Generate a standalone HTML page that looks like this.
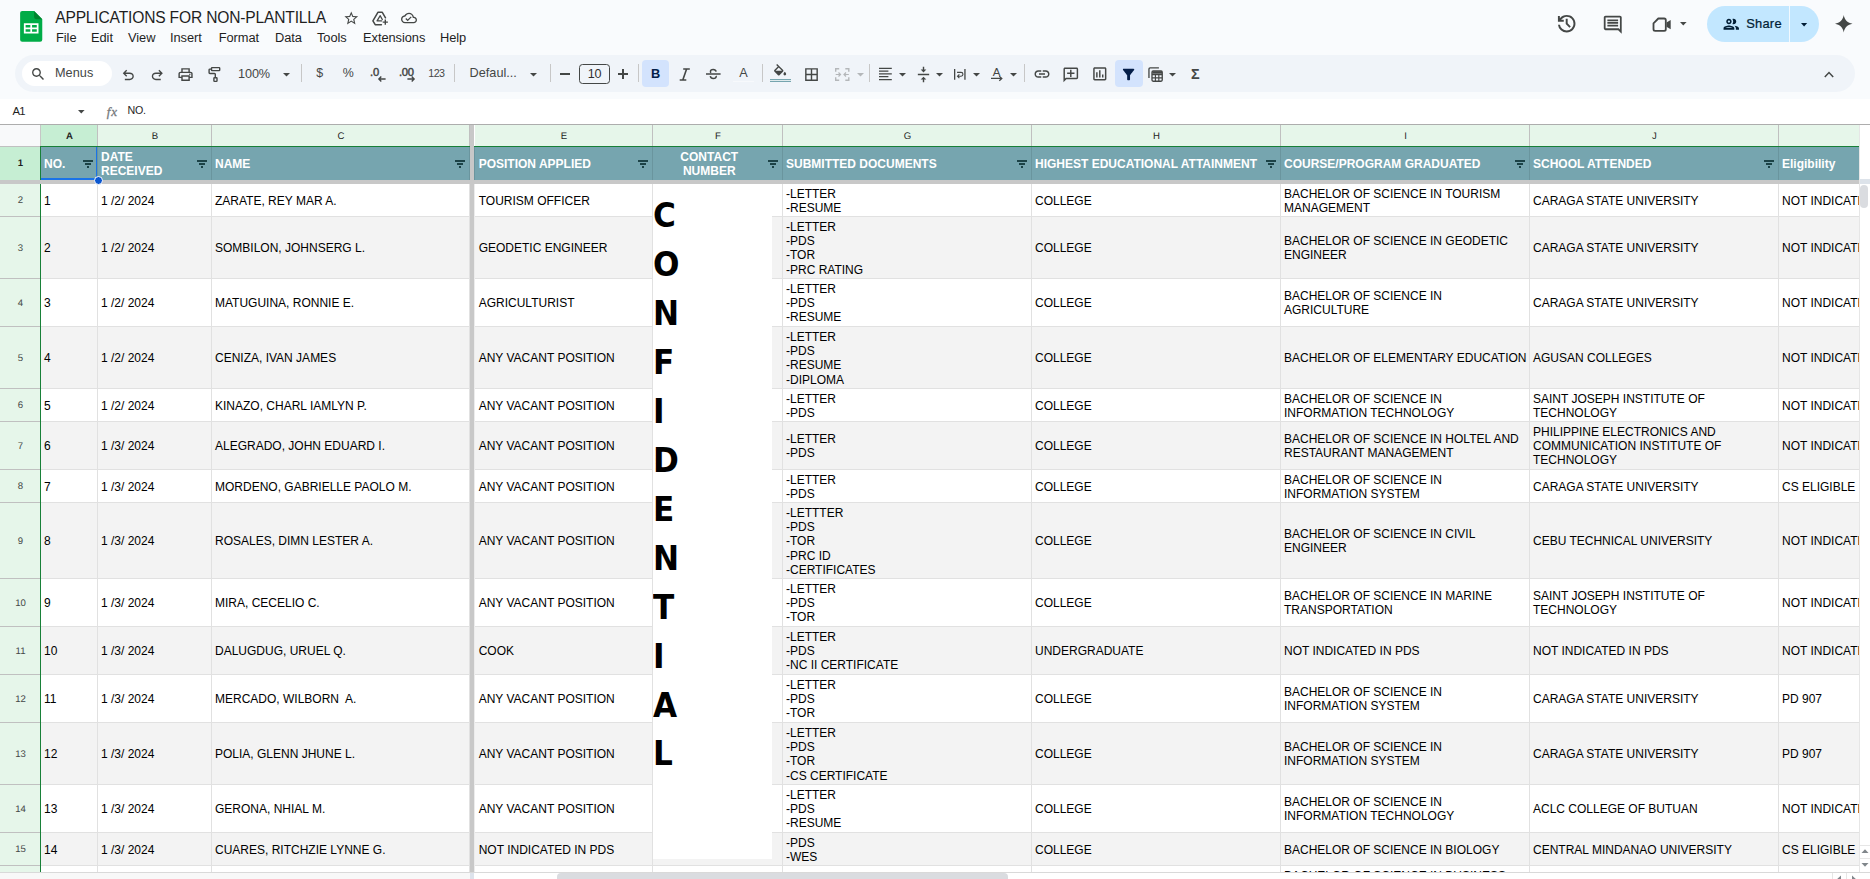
<!DOCTYPE html><html lang="en"><head><meta charset="utf-8"><title>APPLICATIONS FOR NON-PLANTILLA - Google Sheets</title><style>
*{box-sizing:border-box;margin:0;padding:0}
html,body{width:1870px;height:879px;overflow:hidden;background:#f9fbfd;font-family:"Liberation Sans",sans-serif;color:#1f1f1f}
.abs{position:absolute}
#root{position:relative;width:1870px;height:879px;overflow:hidden;background:#f9fbfd}
.ui{font-family:"Liberation Sans",sans-serif;color:#444746;white-space:nowrap}
.title{left:55.2px;top:7.8px;font-size:15.6px;letter-spacing:-0.175px;color:#1f1f1f;line-height:20px}
.menu{top:30.2px;font-size:12.85px;line-height:16px;color:#1f1f1f;letter-spacing:-0.05px}
.tb{left:15px;top:55px;width:1840px;height:37px;border-radius:18.5px;background:#f0f4f9}
.sep{width:1px;height:18px;top:64px;background:#c7c7c7}
.cell{position:absolute;overflow:hidden;font-size:12px;line-height:14.33px;color:#000;display:flex;align-items:center;padding:2px 3px 0 3px;white-space:pre;border-right:1px solid #e1e1e1;border-bottom:1px solid #e1e1e1}
.cell.w{background:#fff}
.cell.g{background:#f3f3f3}
.hc{position:absolute;overflow:hidden;font-size:12px;line-height:14.33px;color:#fff;font-weight:700;display:flex;align-items:center;padding:2px 3px 0 3px;white-space:pre;background:#76a5af;border-right:1px solid #6a959e}
.colh{position:absolute;top:125px;height:21px;background:#e6f6ea;border-right:1px solid #c0c0c0;font-size:9.6px;text-rendering:geometricPrecision;color:#1f1f1f;text-align:center;line-height:24px;padding-left:1px}
.rowh{position:absolute;left:0;width:40px;background:#e6f6ea;border-bottom:1px solid #c0c0c0;font-size:9.6px;text-rendering:geometricPrecision;color:#444746;text-align:center;padding-left:1px;padding-top:1px;display:flex;align-items:center;justify-content:center}
svg{position:absolute;overflow:visible}
.conf{font-family:"DejaVu Sans Condensed","DejaVu Sans",sans-serif;font-weight:700;font-size:33.6px;line-height:48.96px;color:#000;word-break:break-all;overflow-wrap:anywhere;white-space:normal;text-align:left;transform-origin:0 0;transform:scaleX(1.03)}
</style></head><body><div id="root">
<!--TITLEBAR-->
<div class="abs ui title">APPLICATIONS FOR NON-PLANTILLA</div>
<div class="abs ui menu" style="left:56px">File</div>
<div class="abs ui menu" style="left:91px">Edit</div>
<div class="abs ui menu" style="left:128px">View</div>
<div class="abs ui menu" style="left:170px">Insert</div>
<div class="abs ui menu" style="left:218.7px">Format</div>
<div class="abs ui menu" style="left:275px">Data</div>
<div class="abs ui menu" style="left:317px">Tools</div>
<div class="abs ui menu" style="left:363px">Extensions</div>
<div class="abs ui menu" style="left:440px">Help</div>
<svg style="left:19.6px;top:11.1px" width="22.4" height="30.8" viewBox="0 0 23 32"><path d="M2.2 0H14.5L23 8.5V29.8a2.2 2.2 0 0 1-2.200 2.200H2.200A2.200 2.200 0 0 1 0 29.800V2.200A2.200 2.200 0 0 1 2.200 0z" fill="#00ac47"/><path d="M14.5 0L23 8.500H16.700a2.200 2.200 0 0 1-2.200-2.200z" fill="#00832d"/><path d="M3.900 12.700h15.200v10.600H3.900z M5.700 14.500v2.600h4.900v-2.600z M12.400 14.500v2.600h4.900v-2.600z M5.700 18.900v2.600h4.900v-2.600z M12.400 18.900v2.600h4.900v-2.600z" fill="#fff" fill-rule="evenodd"/></svg>
<svg style="left:343.05px;top:10.05px" width="16.5" height="16.5" viewBox="0 0 24 24" fill="#444746" ><path d="M22 9.24l-7.19-.62L12 2 9.19 8.63 2 9.24l5.46 4.73L5.82 21 12 17.27 18.18 21l-1.63-7.03L22 9.24zM12 15.4l-3.76 2.27 1-4.28-3.32-2.88 4.38-.38L12 6.1l1.710 4.040 4.380.380-3.320 2.880 1 4.280L12 15.400z" /></svg>
<svg style="left:370px;top:9px" width="20" height="18" viewBox="370 9 20 18" fill="none" stroke="#444746" stroke-width="1.500" stroke-linejoin="round" stroke-linecap="round"><path d="M385.500 17.800L382.300 12.300H377.900L372.900 20.900L375.200 24.700H381.400"/><path d="M382.300 19.500L380.100 15.700L377.100 20.900H381.600" stroke-width="1.300"/><path d="M385.300 19.500V24.800M382.700 22.150H387.900" stroke-width="1.400" stroke-linecap="butt"/></svg>
<svg style="left:401.00px;top:9.80px" width="16" height="16" viewBox="0 0 24 24" fill="#444746" ><path d="M19.35 10.04C18.67 6.59 15.64 4 12 4 9.11 4 6.6 5.64 5.35 8.04 2.34 8.36 0 10.91 0 14c0 3.31 2.69 6 6 6h13c2.76 0 5-2.24 5-5 0-2.64-2.05-4.78-4.65-4.960zM19 18H6c-2.210 0-4-1.790-4-4 0-2.050 1.530-3.760 3.560-3.970l1.070-.110.500-.950C8.080 7.140 9.940 6 12 6c2.620 0 4.880 1.860 5.390 4.430l.300 1.500 1.530.110c1.560.100 2.780 1.410 2.780 2.960 0 1.650-1.350 3-3 3zm-9-3.820l-2.090-2.090L6.500 13.500 10 17l6.010-6.010-1.410-1.410z" /></svg>
<svg style="left:1555.10px;top:11.90px" width="23.4" height="23.4" viewBox="0 -960 960 960" fill="#444746" ><path d="M480-120q-138 0-240.500-91.500T122-440h82q14 104 92.500 172T480-200q117 0 198.500-81.500T760-480q0-117-81.500-198.500T480-760q-69 0-129 32t-101 88h110v80H120v-240h80v94q51-64 124.500-99T480-840q75 0 140.500 28.500t114 77q48.500 48.500 77 114T840-480q0 75-28.500 140.500t-77 114q-48.500 48.500-114 77T480-120Zm112-192L440-464v-216h80v184l128 128-56 56Z"/></svg>
<svg style="left:1601.55px;top:13.65px" width="21.5" height="21.5" viewBox="0 0 24 24" fill="#444746" transform="scale(-1,1)"><path d="M4 4h16v12H5.170L4 17.170V4m0-2c-1.100 0-1.990.900-1.990 2L2 22l4-4h14c1.100 0 2-.900 2-2V4c0-1.100-.900-2-2-2H4zm2 10h12v2H6v-2zm0-3h12v2H6V9zm0-3h12v2H6V6z" /></svg>
<svg style="left:1652px;top:16px" width="20" height="17" viewBox="0 0 20 17"><path d="M6.300 2.500H12.200a1.600 1.600 0 0 1 1.600 1.600V13.200a1.600 1.600 0 0 1-1.600 1.600H3.100a1.600 1.600 0 0 1-1.600-1.600V7.300Z" fill="none" stroke="#444746" stroke-width="1.800" stroke-linejoin="round"/><path d="M14.500 6.600L18.700 4v9.300L14.500 10.700z" fill="#444746"/></svg>
<svg style="left:1679.70px;top:21.50px" width="6.6" height="3.4" viewBox="0 0 10 5" preserveAspectRatio="none" fill="#444746"><path d="M0 0h10L5 5z"/></svg>
<div class="abs" style="left:1707px;top:6px;width:112px;height:36px;border-radius:18px;background:#c2e7ff"></div>
<div class="abs" style="left:1788.600px;top:6px;width:1.400px;height:36px;background:#f2f9ff"></div>
<svg style="left:1721.55px;top:14.75px" width="18.5" height="18.5" viewBox="0 0 24 24" fill="#001d35" ><path d="M9 13.75c-2.34 0-7 1.17-7 3.5V19h14v-1.75c0-2.330-4.660-3.500-7-3.500zM4.340 17c.840-.580 2.870-1.250 4.660-1.250s3.820.670 4.660 1.250H4.340zM9 12c1.930 0 3.500-1.570 3.500-3.500S10.930 5 9 5 5.500 6.570 5.500 8.500 7.070 12 9 12zm0-5c.830 0 1.500.670 1.500 1.500s-.670 1.500-1.500 1.500-1.500-.670-1.500-1.500.670-1.500 1.500-1.500zm7.040 6.810c1.160.840 1.960 1.960 1.960 3.440V19h4v-1.750c0-2.020-3.500-3.170-5.960-3.440zM15 12c1.930 0 3.500-1.570 3.500-3.500S16.930 5 15 5c-.540 0-1.040.130-1.500.350.630.890 1 1.980 1 3.150s-.370 2.260-1 3.150c.460.220.960.350 1.500.350z" /></svg>
<div class="abs ui" style="left:1746.2px;top:15.50px;height:16.12px;line-height:16.12px;font-size:12.9px;color:#001d35;font-weight:400;letter-spacing:0.25px;-webkit-text-stroke:0.22px #001d35;">Share</div>
<svg style="left:1801.00px;top:22.90px" width="6.2" height="3.4" viewBox="0 0 10 5" preserveAspectRatio="none" fill="#001d35"><path d="M0 0h10L5 5z"/></svg>
<svg style="left:1834.700px;top:15.300px" width="17.500" height="17.500" viewBox="0 0 24 24" fill="#444746"><path d="M12 0C13 6.500 17.500 11 24 12 17.500 13 13 17.500 12 24 11 17.500 6.500 13 0 12 6.500 11 11 6.500 12 0z"/></svg>
<!--/TITLEBAR-->
<div class="abs tb"></div>
<!--TOOLBAR-->
<div class="abs" style="left:22px;top:61px;width:90px;height:25px;border-radius:12.500px;background:#fff"></div>
<svg style="left:30.40px;top:65.90px" width="16.4" height="16.4" viewBox="0 0 24 24" fill="#444746" ><path d="M15.5 14h-.79l-.28-.27C15.41 12.59 16 11.11 16 9.5 16 5.91 13.09 3 9.5 3S3 5.91 3 9.5 5.91 16 9.5 16c1.61 0 3.09-.59 4.23-1.57l.27.28v.79l5 4.99L20.49 19l-4.99-5zm-6 0C7.01 14 5 11.99 5 9.500S7.010 5 9.500 5 14 7.010 14 9.500 11.990 14 9.500 14z" /></svg>
<div class="abs ui" style="left:55px;top:65.80px;height:15.88px;line-height:15.88px;font-size:12.7px;color:#444746;font-weight:400;letter-spacing:0.05px;">Menus</div>
<svg style="left:120.00px;top:67.10px" width="16.6" height="16.6" viewBox="0 -960 960 960" fill="#444746" ><path d="M280-200v-80h284q63 0 109.500-40T720-420q0-60-46.500-100T564-560H312l104 104-56 56-200-200 200-200 56 56-104 104h252q97 0 166.500 63T800-420q0 94-69.500 157T564-200H280Z"/></svg>
<svg style="left:148.60px;top:67.10px" width="16.6" height="16.6" viewBox="0 -960 960 960" fill="#444746" ><path d="M396-200q-97 0-166.500-63T160-420q0-94 69.500-157T396-640h252L544-744l56-56 200 200-200 200-56-56 104-104H396q-63 0-109.500 40T240-420q0 60 46.500 100T396-280h284v80H396Z"/></svg>
<svg style="left:177.45px;top:65.55px" width="17.1" height="17.1" viewBox="0 -960 960 960" fill="#444746" ><path d="M640-640v-120H320v120h-80v-200h480v200h-80Zm-480 80h640-640Zm560 100q17 0 28.500-11.500T760-500q0-17-11.500-28.500T720-540q-17 0-28.500 11.500T680-500q0 17 11.500 28.500T720-460Zm-80 260v-160H320v160h320Zm80 80H240v-160H80v-240q0-51 35-85.500t85-34.500h560q51 0 85.500 34.500T880-520v240H720v160Zm80-240v-160q0-17-11.500-28.500T760-560H200q-17 0-28.500 11.500T160-520v160h80v-80h480v80h80Z"/></svg>
<svg style="left:200px;top:60px" width="30" height="28" viewBox="0 0 30 28" fill="none" stroke="#444746" stroke-width="1.400" stroke-linejoin="round" stroke-linecap="round"><rect x="11.500" y="7.600" width="8.200" height="3.000" rx="0.600"/><path d="M11.500 9.100H9.900a0.800 0.800 0 0 0-0.800 0.800v2.800a0.800 0.800 0 0 0 0.800 0.800h4.600a0.800 0.800 0 0 1 0.800 0.800v2.500"/><rect x="13.900" y="17.700" width="3.100" height="3.700" rx="0.600"/></svg>
<div class="abs ui" style="left:238px;top:67.10px;height:15.88px;line-height:15.88px;font-size:12.7px;color:#444746;font-weight:400;letter-spacing:-0.1px;">100%</div>
<svg style="left:282.80px;top:72.70px" width="7" height="3.6" viewBox="0 0 10 5" preserveAspectRatio="none" fill="#444746"><path d="M0 0h10L5 5z"/></svg>
<div class="abs sep" style="left:301px"></div>
<div class="abs ui" style="left:319.6px;top:66.20px;height:15.50px;line-height:15.50px;font-size:12.4px;color:#444746;font-weight:400;letter-spacing:0px;transform:translateX(-50%);">$</div>
<div class="abs ui" style="left:348.2px;top:66.20px;height:15.50px;line-height:15.50px;font-size:12.4px;color:#444746;font-weight:400;letter-spacing:0px;transform:translateX(-50%);">%</div>
<div class="abs ui" style="left:370px;top:65.40px;height:14.00px;line-height:14.00px;font-size:11.2px;color:#444746;font-weight:400;letter-spacing:-0.1px;-webkit-text-stroke:0.45px #444746;">.0</div>
<svg style="left:377.500px;top:75.500px" width="8" height="6" viewBox="0 0 8 6" fill="none" stroke="#444746" stroke-width="1.400"><path d="M7.600 3H1M3.300 0.600L0.900 3l2.400 2.400"/></svg>
<div class="abs ui" style="left:399px;top:65.40px;height:14.00px;line-height:14.00px;font-size:11.2px;color:#444746;font-weight:400;letter-spacing:-0.35px;-webkit-text-stroke:0.45px #444746;">.00</div>
<svg style="left:406.500px;top:75.500px" width="8" height="6" viewBox="0 0 8 6" fill="none" stroke="#444746" stroke-width="1.400"><path d="M0.400 3H7M4.700 0.600L7.100 3 4.700 5.400"/></svg>
<div class="abs ui" style="left:428.3px;top:66.60px;height:13.38px;line-height:13.38px;font-size:10.7px;color:#444746;font-weight:400;letter-spacing:-0.55px;">123</div>
<div class="abs sep" style="left:454px"></div>
<div class="abs ui" style="left:469.6px;top:66.10px;height:15.88px;line-height:15.88px;font-size:12.7px;color:#444746;font-weight:400;letter-spacing:0px;">Defaul...</div>
<svg style="left:529.70px;top:72.70px" width="7" height="3.6" viewBox="0 0 10 5" preserveAspectRatio="none" fill="#444746"><path d="M0 0h10L5 5z"/></svg>
<div class="abs sep" style="left:550px"></div>
<div class="abs" style="left:560px;top:73.100px;width:9.600px;height:1.500px;background:#444746"></div>
<div class="abs" style="left:579px;top:63.500px;width:31px;height:20.500px;border:1px solid #444746;border-radius:3.500px"></div>
<div class="abs ui" style="left:594.6px;top:67.10px;height:15.75px;line-height:15.75px;font-size:12.6px;color:#303030;font-weight:400;letter-spacing:-0.2px;transform:translateX(-50%);">10</div>
<div class="abs" style="left:618.200px;top:73.150px;width:9.800px;height:1.450px;background:#444746"></div>
<div class="abs" style="left:622.400px;top:69.050px;width:1.450px;height:9.800px;background:#444746"></div>
<div class="abs sep" style="left:638px"></div>
<div class="abs" style="left:642px;top:60px;width:27px;height:27px;border-radius:4px;background:#d3e3fd"></div>
<div class="abs ui" style="left:655.6px;top:66.40px;height:16.00px;line-height:16.00px;font-size:12.8px;color:#041e49;font-weight:700;letter-spacing:0px;transform:translateX(-50%);">B</div>
<svg style="left:677.500px;top:67.500px" width="14" height="13" viewBox="0 0 14 13" fill="none" stroke="#444746" stroke-width="1.600"><path d="M5.200 1h6.600M1.700 12h6.600M8.600 1L4.800 12"/></svg>
<svg style="left:705px;top:65.900px" width="17" height="16" viewBox="0 0 17 16" fill="none" stroke="#444746" stroke-width="1.500"><path d="M1 8h14.600"/><g transform="translate(8.300 8) scale(0.860) translate(-8.500 -8)"><path d="M11.800 5.200C11.500 3.600 10.200 2.700 8.400 2.700 6.500 2.700 5.200 3.700 5.200 5.200c0 .6.200 1.100.5 1.500M5 10.600c.3 1.700 1.600 2.700 3.500 2.700 2 0 3.400-1 3.400-2.600 0-.2 0-.4-.1-.6" stroke-width="1.700"/></g></svg>
<div class="abs ui" style="left:743.4px;top:65.90px;height:15.88px;line-height:15.88px;font-size:12.7px;color:#444746;font-weight:400;letter-spacing:0px;transform:translateX(-50%);">A</div>
<div class="abs" style="left:733px;top:80.700px;width:21px;height:1.200px;background:#f7f9fc"></div>
<div class="abs sep" style="left:762px"></div>
<svg style="left:772px;top:64px" width="16.200" height="13.500" viewBox="0 0 24 20" fill="#444746"><path d="M16.56 8.94L7.62 0 6.21 1.41l2.38 2.38-5.15 5.15c-.59.59-.59 1.54 0 2.12l5.5 5.5c.29.29.68.44 1.06.44s.77-.15 1.06-.44l5.5-5.5c.59-.58.59-1.53 0-2.12zM5.21 10L10 5.21 14.790 10H5.210zM19 11.500s-2 2.170-2 3.500c0 1.100.900 2 2 2s2-.900 2-2c0-1.330-2-3.500-2-3.500z"/></svg>
<div class="abs" style="left:770px;top:78.900px;width:21px;height:3.300px;background:#dfeaec;border-top:0.900px solid #76a5af;border-bottom:0.900px solid #76a5af"></div>
<svg style="left:803.10px;top:65.80px" width="17" height="17" viewBox="0 0 24 24" fill="#444746" ><path d="M3 3v18h18V3H3zm8 16H5v-6h6v6zm0-8H5V5h6v6zm8 8h-6v-6h6v6zm0-8h-6V5h6v6z" /></svg>
<svg style="left:834.500px;top:67.500px" width="14.500" height="13" viewBox="0 0 14.500 13" fill="none" stroke="#b4b7ba" stroke-width="1.400"><path d="M4.200 0.700H0.700v3.100M0.700 9.200v3.100h3.500M10.300 0.700h3.500v3.100M13.800 9.200v3.100h-3.500"/><path d="M0.700 6.500h4.600M3.500 4.500l2 2-2 2M13.800 6.500H9.200M11 4.500l-2 2 2 2" stroke-width="1.200"/></svg>
<svg style="left:856.50px;top:72.70px" width="7" height="3.6" viewBox="0 0 10 5" preserveAspectRatio="none" fill="#b4b7ba"><path d="M0 0h10L5 5z"/></svg>
<div class="abs sep" style="left:869px"></div>
<svg style="left:879px;top:67px" width="13" height="14" viewBox="0 0 13 14" fill="#444746"><path d="M0 0.700h12.800v1.250H0zM0 3.500h9.400v1.250H0zM0 6.300h12.800v1.250H0zM0 9.100h9.400v1.250H0zM0 12h12.800v1.250H0z"/></svg>
<svg style="left:898.80px;top:72.70px" width="7" height="3.6" viewBox="0 0 10 5" preserveAspectRatio="none" fill="#444746"><path d="M0 0h10L5 5z"/></svg>
<svg style="left:914.70px;top:65.70px" width="17" height="17" viewBox="0 0 24 24" fill="#444746" ><path d="M8 19h3v4h2v-4h3l-4-4-4 4zm8-14h-3V1h-2v4H8l4 4 4-4zM4 11v2h16v-2H4z" /></svg>
<svg style="left:935.80px;top:72.70px" width="7" height="3.6" viewBox="0 0 10 5" preserveAspectRatio="none" fill="#444746"><path d="M0 0h10L5 5z"/></svg>
<svg style="left:954px;top:68.800px" width="11.600" height="10.800" viewBox="0 0 12.500 11.500" fill="none" stroke="#444746" stroke-width="1.400"><path d="M0.700 0v11.500M11.800 0v11.500"/><path d="M3.300 3.600h4.300a2 2 0 0 1 0 4.100H4M5.800 5.700L3.800 7.700l2 2" stroke-width="1.200"/></svg>
<svg style="left:973.00px;top:72.70px" width="7" height="3.6" viewBox="0 0 10 5" preserveAspectRatio="none" fill="#444746"><path d="M0 0h10L5 5z"/></svg>
<div class="abs ui" style="left:996.6px;top:64.70px;height:14.38px;line-height:14.38px;font-size:11.5px;color:#444746;font-weight:400;letter-spacing:0px;transform:translateX(-50%);">A</div>
<svg style="left:990px;top:75px" width="14" height="7" viewBox="990 75 14 7" fill="none" stroke="#444746" stroke-width="1.250"><path d="M991 78.450H1001.600M999.300 76.150L1001.800 78.450L999.300 80.750"/></svg>
<svg style="left:1009.90px;top:72.70px" width="7" height="3.6" viewBox="0 0 10 5" preserveAspectRatio="none" fill="#444746"><path d="M0 0h10L5 5z"/></svg>
<div class="abs sep" style="left:1024px"></div>
<svg style="left:1033.00px;top:65.20px" width="18" height="18" viewBox="0 0 24 24" fill="#444746" ><path d="M3.9 12c0-1.71 1.39-3.1 3.1-3.1h4V7H7c-2.76 0-5 2.24-5 5s2.24 5 5 5h4v-1.9H7c-1.71 0-3.1-1.39-3.1-3.1zM8 13h8v-2H8v2zm9-6h-4v1.9h4c1.71 0 3.1 1.39 3.1 3.1s-1.39 3.1-3.1 3.1h-4V17h4c2.76 0 5-2.24 5-5s-2.240-5-5-5z" /></svg>
<svg style="left:1062.40px;top:65.80px" width="17.6" height="17.6" viewBox="0 0 24 24" fill="#444746" transform="scale(-1,1)"><path d="M22 4c0-1.1-.9-2-2-2H4c-1.1 0-2 .9-2 2v12c0 1.1.9 2 2 2h14l4 4V4zm-2 13.17L18.83 16H4V4h16v13.170zM13 5h-2v4H7v2h4v4h2v-4h4V9h-4z" /></svg>
<svg style="left:1091.30px;top:65.40px" width="17.6" height="17.6" viewBox="0 0 24 24" fill="#444746" ><path d="M19 3H5c-1.1 0-2 .9-2 2v14c0 1.1.9 2 2 2h14c1.1 0 2-.9 2-2V5c0-1.1-.9-2-2-2zm0 16H5V5h14v14zM7 10h2v7H7zm4-3h2v10h-2zm4 6h2v4h-2z" /></svg>
<div class="abs" style="left:1115px;top:60px;width:28px;height:27px;border-radius:4px;background:#d3e3fd"></div>
<svg style="left:1120.40px;top:65.60px" width="17.2" height="17.2" viewBox="0 0 24 24" fill="#041e49" ><path d="M4.25 5.61C6.27 8.2 10 13 10 13v6c0 .55.45 1 1 1h2c.55 0 1-.45 1-1v-6s3.720-4.800 5.740-7.390A.998.998 0 0 0 18.950 4H5.040c-.830 0-1.300.950-.790 1.610z" /></svg>
<svg style="left:1148.200px;top:66.700px" width="15.200" height="15.200" viewBox="0 0 16 16" fill="none" stroke="#444746" stroke-width="1.400" stroke-linejoin="round"><path d="M1 11.500V2.200a1.200 1.200 0 0 1 1.200-1.200H11.500"/><rect x="4.200" y="4.200" width="10.800" height="10.800" rx="1.200"/><path d="M4.200 8h10.800M4.200 11.500h10.800M7.800 8v7M11.400 8v7" stroke-width="1.200"/><path d="M4.500 5.800h10.300" stroke-width="2.600"/></svg>
<svg style="left:1169.10px;top:72.70px" width="7" height="3.6" viewBox="0 0 10 5" preserveAspectRatio="none" fill="#444746"><path d="M0 0h10L5 5z"/></svg>
<div class="abs ui" style="left:1195.3px;top:64.80px;height:18.00px;line-height:18.00px;font-size:14.4px;color:#444746;font-weight:700;letter-spacing:0px;transform:translateX(-50%);">Σ</div>
<svg style="left:1824px;top:71px" width="10" height="7" viewBox="0 0 10 7" fill="none" stroke="#444746" stroke-width="1.500"><path d="M0.800 6L5 1.600 9.200 6"/></svg>
<!--/TOOLBAR-->
<div class="abs" style="left:0;top:99px;width:1870px;height:25px;background:#fff"></div>
<div class="abs" style="left:0;top:124px;width:1870px;height:1px;background:#adadad"></div>
<!--FORMULA-->
<div class="abs ui" style="left:12.6px;top:103.70px;height:14.12px;line-height:14.12px;font-size:11.3px;color:#1f1f1f;font-weight:400;letter-spacing:-0.95px;">A1</div>
<svg style="left:77.50px;top:109.50px" width="6.6" height="3.4" viewBox="0 0 10 5" preserveAspectRatio="none" fill="#444746"><path d="M0 0h10L5 5z"/></svg>
<div class="abs ui" style="left:106.800px;top:102.800px;font-family:'Liberation Serif',serif;font-style:italic;font-size:13px;line-height:18px;color:#75797c;letter-spacing:0.800px;-webkit-text-stroke:0.300px #75797c">fx</div>
<div class="abs" style="left:127.600px;top:102.600px;font-size:10.700px;letter-spacing:-0.350px;line-height:14px;color:#1f1f1f;white-space:nowrap">NO.</div>
<!--/FORMULA-->
<div class="abs" id="grid" style="left:0;top:125px;width:1859px;height:747px;overflow:hidden;background:#fff">
<div class="abs" style="left:0;top:0;width:41px;height:21px;background:#f8f9fa;border-right:1px solid #c6c6c6"></div>
<div class="colh" style="top:0;left:41px;width:57px;background:#c6eed3;font-weight:700">A</div>
<div class="colh" style="top:0;left:98px;width:114px;background:#e6f6ea;font-weight:400">B</div>
<div class="colh" style="top:0;left:212px;width:258px;background:#e6f6ea;font-weight:400">C</div>
<div class="colh" style="top:0;left:475px;width:178px;background:#e6f6ea;font-weight:400">E</div>
<div class="colh" style="top:0;left:653px;width:130px;background:#e6f6ea;font-weight:400">F</div>
<div class="colh" style="top:0;left:783px;width:249px;background:#e6f6ea;font-weight:400">G</div>
<div class="colh" style="top:0;left:1032px;width:249px;background:#e6f6ea;font-weight:400">H</div>
<div class="colh" style="top:0;left:1281px;width:249px;background:#e6f6ea;font-weight:400">I</div>
<div class="colh" style="top:0;left:1530px;width:249px;background:#e6f6ea;font-weight:400">J</div>
<div class="colh" style="top:0;left:1779px;width:250px;background:#e6f6ea;font-weight:400">K</div>
<div class="hc" style="left:41px;top:22px;width:57px;height:33px;">NO.</div>
<div class="hc" style="left:98px;top:22px;width:114px;height:33px;"><div><div style="height:14.00px">DATE</div><div style="height:14.66px">RECEIVED</div></div></div>
<div class="hc" style="left:212px;top:22px;width:258px;height:33px;">NAME</div>
<div class="hc" style="left:475px;top:22px;width:178px;height:33px;padding-left:3.7px;">POSITION APPLIED</div>
<div class="hc" style="left:653px;top:22px;width:130px;height:33px;justify-content:center;text-align:center;padding-right:19.5px;"><div><div style="height:14.00px">CONTACT</div><div style="height:14.66px">NUMBER</div></div></div>
<div class="hc" style="left:783px;top:22px;width:249px;height:33px;">SUBMITTED DOCUMENTS</div>
<div class="hc" style="left:1032px;top:22px;width:249px;height:33px;">HIGHEST EDUCATIONAL ATTAINMENT</div>
<div class="hc" style="left:1281px;top:22px;width:249px;height:33px;">COURSE/PROGRAM GRADUATED</div>
<div class="hc" style="left:1530px;top:22px;width:249px;height:33px;">SCHOOL ATTENDED</div>
<div class="hc" style="left:1779px;top:22px;width:250px;height:33px;">Eligibility</div>
<div class="cell w" style="left:41px;top:59px;width:57px;height:33px;">1</div>
<div class="cell w" style="left:98px;top:59px;width:114px;height:33px;">1 /2/ 2024</div>
<div class="cell w" style="left:212px;top:59px;width:258px;height:33px;">ZARATE, REY MAR A.</div>
<div class="cell w" style="left:475px;top:59px;width:178px;height:33px;padding-left:3.7px;">TOURISM OFFICER</div>
<div class="cell w" style="left:653px;top:59px;width:130px;height:33px;"></div>
<div class="cell w" style="left:783px;top:59px;width:249px;height:33px;"><div><div style="height:14.00px">-LETTER</div><div style="height:14.66px">-RESUME</div></div></div>
<div class="cell w" style="left:1032px;top:59px;width:249px;height:33px;">COLLEGE</div>
<div class="cell w" style="left:1281px;top:59px;width:249px;height:33px;"><div><div style="height:14.00px">BACHELOR OF SCIENCE IN TOURISM</div><div style="height:14.66px">MANAGEMENT</div></div></div>
<div class="cell w" style="left:1530px;top:59px;width:249px;height:33px;">CARAGA STATE UNIVERSITY</div>
<div class="cell w" style="left:1779px;top:59px;width:250px;height:33px;">NOT INDICATED IN PDS</div>
<div class="rowh" style="top:59px;height:33px">2</div>
<div class="cell g" style="left:41px;top:92px;width:57px;height:62px;">2</div>
<div class="cell g" style="left:98px;top:92px;width:114px;height:62px;">1 /2/ 2024</div>
<div class="cell g" style="left:212px;top:92px;width:258px;height:62px;">SOMBILON, JOHNSERG L.</div>
<div class="cell g" style="left:475px;top:92px;width:178px;height:62px;padding-left:3.7px;">GEODETIC ENGINEER</div>
<div class="cell g" style="left:653px;top:92px;width:130px;height:62px;"></div>
<div class="cell g" style="left:783px;top:92px;width:249px;height:62px;"><div><div style="height:14.00px">-LETTER</div><div style="height:14.00px">-PDS</div><div style="height:15.00px">-TOR</div><div style="height:14.32px">-PRC RATING</div></div></div>
<div class="cell g" style="left:1032px;top:92px;width:249px;height:62px;">COLLEGE</div>
<div class="cell g" style="left:1281px;top:92px;width:249px;height:62px;"><div><div style="height:14.00px">BACHELOR OF SCIENCE IN GEODETIC</div><div style="height:14.66px">ENGINEER</div></div></div>
<div class="cell g" style="left:1530px;top:92px;width:249px;height:62px;">CARAGA STATE UNIVERSITY</div>
<div class="cell g" style="left:1779px;top:92px;width:250px;height:62px;">NOT INDICATED IN PDS</div>
<div class="rowh" style="top:92px;height:62px">3</div>
<div class="cell w" style="left:41px;top:154px;width:57px;height:48px;">3</div>
<div class="cell w" style="left:98px;top:154px;width:114px;height:48px;">1 /2/ 2024</div>
<div class="cell w" style="left:212px;top:154px;width:258px;height:48px;">MATUGUINA, RONNIE E.</div>
<div class="cell w" style="left:475px;top:154px;width:178px;height:48px;padding-left:3.7px;">AGRICULTURIST</div>
<div class="cell w" style="left:653px;top:154px;width:130px;height:48px;"></div>
<div class="cell w" style="left:783px;top:154px;width:249px;height:48px;"><div><div style="height:14.00px">-LETTER</div><div style="height:14.00px">-PDS</div><div style="height:14.99px">-RESUME</div></div></div>
<div class="cell w" style="left:1032px;top:154px;width:249px;height:48px;">COLLEGE</div>
<div class="cell w" style="left:1281px;top:154px;width:249px;height:48px;"><div><div style="height:14.00px">BACHELOR OF SCIENCE IN</div><div style="height:14.66px">AGRICULTURE</div></div></div>
<div class="cell w" style="left:1530px;top:154px;width:249px;height:48px;">CARAGA STATE UNIVERSITY</div>
<div class="cell w" style="left:1779px;top:154px;width:250px;height:48px;">NOT INDICATED IN PDS</div>
<div class="rowh" style="top:154px;height:48px">4</div>
<div class="cell g" style="left:41px;top:202px;width:57px;height:62px;">4</div>
<div class="cell g" style="left:98px;top:202px;width:114px;height:62px;">1 /2/ 2024</div>
<div class="cell g" style="left:212px;top:202px;width:258px;height:62px;">CENIZA, IVAN JAMES</div>
<div class="cell g" style="left:475px;top:202px;width:178px;height:62px;padding-left:3.7px;">ANY VACANT POSITION</div>
<div class="cell g" style="left:653px;top:202px;width:130px;height:62px;"></div>
<div class="cell g" style="left:783px;top:202px;width:249px;height:62px;"><div><div style="height:14.00px">-LETTER</div><div style="height:14.00px">-PDS</div><div style="height:15.00px">-RESUME</div><div style="height:14.32px">-DIPLOMA</div></div></div>
<div class="cell g" style="left:1032px;top:202px;width:249px;height:62px;">COLLEGE</div>
<div class="cell g" style="left:1281px;top:202px;width:249px;height:62px;">BACHELOR OF ELEMENTARY EDUCATION</div>
<div class="cell g" style="left:1530px;top:202px;width:249px;height:62px;">AGUSAN COLLEGES</div>
<div class="cell g" style="left:1779px;top:202px;width:250px;height:62px;">NOT INDICATED IN PDS</div>
<div class="rowh" style="top:202px;height:62px">5</div>
<div class="cell w" style="left:41px;top:264px;width:57px;height:33px;">5</div>
<div class="cell w" style="left:98px;top:264px;width:114px;height:33px;">1 /2/ 2024</div>
<div class="cell w" style="left:212px;top:264px;width:258px;height:33px;">KINAZO, CHARL IAMLYN P.</div>
<div class="cell w" style="left:475px;top:264px;width:178px;height:33px;padding-left:3.7px;">ANY VACANT POSITION</div>
<div class="cell w" style="left:653px;top:264px;width:130px;height:33px;"></div>
<div class="cell w" style="left:783px;top:264px;width:249px;height:33px;"><div><div style="height:14.00px">-LETTER</div><div style="height:14.66px">-PDS</div></div></div>
<div class="cell w" style="left:1032px;top:264px;width:249px;height:33px;">COLLEGE</div>
<div class="cell w" style="left:1281px;top:264px;width:249px;height:33px;"><div><div style="height:14.00px">BACHELOR OF SCIENCE IN</div><div style="height:14.66px">INFORMATION TECHNOLOGY</div></div></div>
<div class="cell w" style="left:1530px;top:264px;width:249px;height:33px;"><div><div style="height:14.00px">SAINT JOSEPH INSTITUTE OF</div><div style="height:14.66px">TECHNOLOGY</div></div></div>
<div class="cell w" style="left:1779px;top:264px;width:250px;height:33px;">NOT INDICATED IN PDS</div>
<div class="rowh" style="top:264px;height:33px">6</div>
<div class="cell g" style="left:41px;top:297px;width:57px;height:48px;">6</div>
<div class="cell g" style="left:98px;top:297px;width:114px;height:48px;">1 /3/ 2024</div>
<div class="cell g" style="left:212px;top:297px;width:258px;height:48px;">ALEGRADO, JOHN EDUARD I.</div>
<div class="cell g" style="left:475px;top:297px;width:178px;height:48px;padding-left:3.7px;">ANY VACANT POSITION</div>
<div class="cell g" style="left:653px;top:297px;width:130px;height:48px;"></div>
<div class="cell g" style="left:783px;top:297px;width:249px;height:48px;"><div><div style="height:14.00px">-LETTER</div><div style="height:14.66px">-PDS</div></div></div>
<div class="cell g" style="left:1032px;top:297px;width:249px;height:48px;">COLLEGE</div>
<div class="cell g" style="left:1281px;top:297px;width:249px;height:48px;"><div><div style="height:14.00px">BACHELOR OF SCIENCE IN HOLTEL AND</div><div style="height:14.66px">RESTAURANT MANAGEMENT</div></div></div>
<div class="cell g" style="left:1530px;top:297px;width:249px;height:48px;"><div><div style="height:14.00px">PHILIPPINE ELECTRONICS AND</div><div style="height:14.00px">COMMUNICATION INSTITUTE OF</div><div style="height:14.99px">TECHNOLOGY</div></div></div>
<div class="cell g" style="left:1779px;top:297px;width:250px;height:48px;">NOT INDICATED IN PDS</div>
<div class="rowh" style="top:297px;height:48px">7</div>
<div class="cell w" style="left:41px;top:345px;width:57px;height:33px;">7</div>
<div class="cell w" style="left:98px;top:345px;width:114px;height:33px;">1 /3/ 2024</div>
<div class="cell w" style="left:212px;top:345px;width:258px;height:33px;">MORDENO, GABRIELLE PAOLO M.</div>
<div class="cell w" style="left:475px;top:345px;width:178px;height:33px;padding-left:3.7px;">ANY VACANT POSITION</div>
<div class="cell w" style="left:653px;top:345px;width:130px;height:33px;"></div>
<div class="cell w" style="left:783px;top:345px;width:249px;height:33px;"><div><div style="height:14.00px">-LETTER</div><div style="height:14.66px">-PDS</div></div></div>
<div class="cell w" style="left:1032px;top:345px;width:249px;height:33px;">COLLEGE</div>
<div class="cell w" style="left:1281px;top:345px;width:249px;height:33px;"><div><div style="height:14.00px">BACHELOR OF SCIENCE IN</div><div style="height:14.66px">INFORMATION SYSTEM</div></div></div>
<div class="cell w" style="left:1530px;top:345px;width:249px;height:33px;">CARAGA STATE UNIVERSITY</div>
<div class="cell w" style="left:1779px;top:345px;width:250px;height:33px;">CS ELIGIBLE</div>
<div class="rowh" style="top:345px;height:33px">8</div>
<div class="cell g" style="left:41px;top:378px;width:57px;height:76px;">8</div>
<div class="cell g" style="left:98px;top:378px;width:114px;height:76px;">1 /3/ 2024</div>
<div class="cell g" style="left:212px;top:378px;width:258px;height:76px;">ROSALES, DIMN LESTER A.</div>
<div class="cell g" style="left:475px;top:378px;width:178px;height:76px;padding-left:3.7px;">ANY VACANT POSITION</div>
<div class="cell g" style="left:653px;top:378px;width:130px;height:76px;"></div>
<div class="cell g" style="left:783px;top:378px;width:249px;height:76px;"><div><div style="height:14.00px">-LETTTER</div><div style="height:14.00px">-PDS</div><div style="height:15.00px">-TOR</div><div style="height:14.00px">-PRC ID</div><div style="height:14.65px">-CERTIFICATES</div></div></div>
<div class="cell g" style="left:1032px;top:378px;width:249px;height:76px;">COLLEGE</div>
<div class="cell g" style="left:1281px;top:378px;width:249px;height:76px;"><div><div style="height:14.00px">BACHELOR OF SCIENCE IN CIVIL</div><div style="height:14.66px">ENGINEER</div></div></div>
<div class="cell g" style="left:1530px;top:378px;width:249px;height:76px;">CEBU TECHNICAL UNIVERSITY</div>
<div class="cell g" style="left:1779px;top:378px;width:250px;height:76px;">NOT INDICATED IN PDS</div>
<div class="rowh" style="top:378px;height:76px">9</div>
<div class="cell w" style="left:41px;top:454px;width:57px;height:48px;">9</div>
<div class="cell w" style="left:98px;top:454px;width:114px;height:48px;">1 /3/ 2024</div>
<div class="cell w" style="left:212px;top:454px;width:258px;height:48px;">MIRA, CECELIO C.</div>
<div class="cell w" style="left:475px;top:454px;width:178px;height:48px;padding-left:3.7px;">ANY VACANT POSITION</div>
<div class="cell w" style="left:653px;top:454px;width:130px;height:48px;"></div>
<div class="cell w" style="left:783px;top:454px;width:249px;height:48px;"><div><div style="height:14.00px">-LETTER</div><div style="height:14.00px">-PDS</div><div style="height:14.99px">-TOR</div></div></div>
<div class="cell w" style="left:1032px;top:454px;width:249px;height:48px;">COLLEGE</div>
<div class="cell w" style="left:1281px;top:454px;width:249px;height:48px;"><div><div style="height:14.00px">BACHELOR OF SCIENCE IN MARINE</div><div style="height:14.66px">TRANSPORTATION</div></div></div>
<div class="cell w" style="left:1530px;top:454px;width:249px;height:48px;"><div><div style="height:14.00px">SAINT JOSEPH INSTITUTE OF</div><div style="height:14.66px">TECHNOLOGY</div></div></div>
<div class="cell w" style="left:1779px;top:454px;width:250px;height:48px;">NOT INDICATED IN PDS</div>
<div class="rowh" style="top:454px;height:48px">10</div>
<div class="cell g" style="left:41px;top:502px;width:57px;height:48px;">10</div>
<div class="cell g" style="left:98px;top:502px;width:114px;height:48px;">1 /3/ 2024</div>
<div class="cell g" style="left:212px;top:502px;width:258px;height:48px;">DALUGDUG, URUEL Q.</div>
<div class="cell g" style="left:475px;top:502px;width:178px;height:48px;padding-left:3.7px;">COOK</div>
<div class="cell g" style="left:653px;top:502px;width:130px;height:48px;"></div>
<div class="cell g" style="left:783px;top:502px;width:249px;height:48px;"><div><div style="height:14.00px">-LETTER</div><div style="height:14.00px">-PDS</div><div style="height:14.99px">-NC II CERTIFICATE</div></div></div>
<div class="cell g" style="left:1032px;top:502px;width:249px;height:48px;">UNDERGRADUATE</div>
<div class="cell g" style="left:1281px;top:502px;width:249px;height:48px;">NOT INDICATED IN PDS</div>
<div class="cell g" style="left:1530px;top:502px;width:249px;height:48px;">NOT INDICATED IN PDS</div>
<div class="cell g" style="left:1779px;top:502px;width:250px;height:48px;">NOT INDICATED IN PDS</div>
<div class="rowh" style="top:502px;height:48px">11</div>
<div class="cell w" style="left:41px;top:550px;width:57px;height:48px;">11</div>
<div class="cell w" style="left:98px;top:550px;width:114px;height:48px;">1 /3/ 2024</div>
<div class="cell w" style="left:212px;top:550px;width:258px;height:48px;">MERCADO, WILBORN  A.</div>
<div class="cell w" style="left:475px;top:550px;width:178px;height:48px;padding-left:3.7px;">ANY VACANT POSITION</div>
<div class="cell w" style="left:653px;top:550px;width:130px;height:48px;"></div>
<div class="cell w" style="left:783px;top:550px;width:249px;height:48px;"><div><div style="height:14.00px">-LETTER</div><div style="height:14.00px">-PDS</div><div style="height:14.99px">-TOR</div></div></div>
<div class="cell w" style="left:1032px;top:550px;width:249px;height:48px;">COLLEGE</div>
<div class="cell w" style="left:1281px;top:550px;width:249px;height:48px;"><div><div style="height:14.00px">BACHELOR OF SCIENCE IN</div><div style="height:14.66px">INFORMATION SYSTEM</div></div></div>
<div class="cell w" style="left:1530px;top:550px;width:249px;height:48px;">CARAGA STATE UNIVERSITY</div>
<div class="cell w" style="left:1779px;top:550px;width:250px;height:48px;">PD 907</div>
<div class="rowh" style="top:550px;height:48px">12</div>
<div class="cell g" style="left:41px;top:598px;width:57px;height:62px;">12</div>
<div class="cell g" style="left:98px;top:598px;width:114px;height:62px;">1 /3/ 2024</div>
<div class="cell g" style="left:212px;top:598px;width:258px;height:62px;">POLIA, GLENN JHUNE L.</div>
<div class="cell g" style="left:475px;top:598px;width:178px;height:62px;padding-left:3.7px;">ANY VACANT POSITION</div>
<div class="cell g" style="left:653px;top:598px;width:130px;height:62px;"></div>
<div class="cell g" style="left:783px;top:598px;width:249px;height:62px;"><div><div style="height:14.00px">-LETTER</div><div style="height:14.00px">-PDS</div><div style="height:15.00px">-TOR</div><div style="height:14.32px">-CS CERTIFICATE</div></div></div>
<div class="cell g" style="left:1032px;top:598px;width:249px;height:62px;">COLLEGE</div>
<div class="cell g" style="left:1281px;top:598px;width:249px;height:62px;"><div><div style="height:14.00px">BACHELOR OF SCIENCE IN</div><div style="height:14.66px">INFORMATION SYSTEM</div></div></div>
<div class="cell g" style="left:1530px;top:598px;width:249px;height:62px;">CARAGA STATE UNIVERSITY</div>
<div class="cell g" style="left:1779px;top:598px;width:250px;height:62px;">PD 907</div>
<div class="rowh" style="top:598px;height:62px">13</div>
<div class="cell w" style="left:41px;top:660px;width:57px;height:48px;">13</div>
<div class="cell w" style="left:98px;top:660px;width:114px;height:48px;">1 /3/ 2024</div>
<div class="cell w" style="left:212px;top:660px;width:258px;height:48px;">GERONA, NHIAL M.</div>
<div class="cell w" style="left:475px;top:660px;width:178px;height:48px;padding-left:3.7px;">ANY VACANT POSITION</div>
<div class="cell w" style="left:653px;top:660px;width:130px;height:48px;"></div>
<div class="cell w" style="left:783px;top:660px;width:249px;height:48px;"><div><div style="height:14.00px">-LETTER</div><div style="height:14.00px">-PDS</div><div style="height:14.99px">-RESUME</div></div></div>
<div class="cell w" style="left:1032px;top:660px;width:249px;height:48px;">COLLEGE</div>
<div class="cell w" style="left:1281px;top:660px;width:249px;height:48px;"><div><div style="height:14.00px">BACHELOR OF SCIENCE IN</div><div style="height:14.66px">INFORMATION TECHNOLOGY</div></div></div>
<div class="cell w" style="left:1530px;top:660px;width:249px;height:48px;">ACLC COLLEGE OF BUTUAN</div>
<div class="cell w" style="left:1779px;top:660px;width:250px;height:48px;">NOT INDICATED IN PDS</div>
<div class="rowh" style="top:660px;height:48px">14</div>
<div class="cell g" style="left:41px;top:708px;width:57px;height:33px;">14</div>
<div class="cell g" style="left:98px;top:708px;width:114px;height:33px;">1 /3/ 2024</div>
<div class="cell g" style="left:212px;top:708px;width:258px;height:33px;">CUARES, RITCHZIE LYNNE G.</div>
<div class="cell g" style="left:475px;top:708px;width:178px;height:33px;padding-left:3.7px;">NOT INDICATED IN PDS</div>
<div class="cell g" style="left:653px;top:708px;width:130px;height:33px;"></div>
<div class="cell g" style="left:783px;top:708px;width:249px;height:33px;"><div><div style="height:14.00px">-PDS</div><div style="height:14.66px">-WES</div></div></div>
<div class="cell g" style="left:1032px;top:708px;width:249px;height:33px;">COLLEGE</div>
<div class="cell g" style="left:1281px;top:708px;width:249px;height:33px;">BACHELOR OF SCIENCE IN BIOLOGY</div>
<div class="cell g" style="left:1530px;top:708px;width:249px;height:33px;">CENTRAL MINDANAO UNIVERSITY</div>
<div class="cell g" style="left:1779px;top:708px;width:250px;height:33px;">CS ELIGIBLE</div>
<div class="rowh" style="top:708px;height:33px">15</div>
<div class="cell w" style="left:41px;top:741px;width:57px;height:48px;align-items:flex-start;padding-top:3px;"></div>
<div class="cell w" style="left:98px;top:741px;width:114px;height:48px;align-items:flex-start;padding-top:3px;"></div>
<div class="cell w" style="left:212px;top:741px;width:258px;height:48px;align-items:flex-start;padding-top:3px;"></div>
<div class="cell w" style="left:475px;top:741px;width:178px;height:48px;padding-left:3.7px;align-items:flex-start;padding-top:3px;"></div>
<div class="cell w" style="left:653px;top:741px;width:130px;height:48px;align-items:flex-start;padding-top:3px;"></div>
<div class="cell w" style="left:783px;top:741px;width:249px;height:48px;align-items:flex-start;padding-top:3px;"></div>
<div class="cell w" style="left:1032px;top:741px;width:249px;height:48px;align-items:flex-start;padding-top:3px;"></div>
<div class="cell w" style="left:1281px;top:741px;width:249px;height:48px;align-items:flex-start;padding-top:3px;">BACHELOR OF SCIENCE IN BUSINESS</div>
<div class="cell w" style="left:1530px;top:741px;width:249px;height:48px;align-items:flex-start;padding-top:3px;"></div>
<div class="cell w" style="left:1779px;top:741px;width:250px;height:48px;align-items:flex-start;padding-top:3px;"></div>
<div class="rowh" style="top:741px;height:48px">16</div>
<div class="rowh" style="top:22px;height:33px;background:#c6eed3;font-weight:700;color:#1f1f1f;border-bottom:none;padding-top:0;padding-bottom:0.6px">1</div>
<!--GRIDEXTRA-->
<div class="abs" style="left:0;top:55px;width:1859px;height:4px;background:#c8c8c8"></div>
<div class="abs" style="left:470px;top:0;width:4px;height:747px;background:#c8c8c8"></div>
<div class="abs" style="left:474px;top:0;width:1px;height:21px;background:#fff"></div>
<div class="abs" style="left:474px;top:22px;width:1px;height:33px;background:#6a959e"></div>
<div class="abs" style="left:474px;top:59px;width:1px;height:688px;background:#ececec"></div>
<div class="abs" style="left:40px;top:21px;width:430px;height:1px;background:#188038"></div>
<div class="abs" style="left:474px;top:21px;width:1385px;height:1px;background:#188038"></div>
<div class="abs" style="left:40px;top:21px;width:1px;height:34px;background:#188038"></div>
<div class="abs" style="left:40px;top:59px;width:1px;height:688px;background:#188038"></div>
<div class="abs" style="left:0;top:21px;width:40px;height:1px;background:#c0c0c0"></div>
<div class="abs" style="left:41px;top:53px;width:56px;height:1.6px;background:#1a73e8"></div>
<div class="abs" style="left:96px;top:22px;width:1.15px;height:32.6px;background:#1a73e8"></div>
<div class="abs" style="left:94px;top:51px;width:9px;height:9px;border-radius:50%;background:#0b57d0;border:1px solid #fff"></div>
<div class="abs" style="left:82.5px;top:35.2px;width:10.6px;height:1.45px;background:#1c4347"></div><div class="abs" style="left:84.7px;top:38.2px;width:6.2px;height:1.45px;background:#1c4347"></div><div class="abs" style="left:86.7px;top:41.1px;width:2.2px;height:1.45px;background:#1c4347"></div>
<div class="abs" style="left:196.5px;top:35.2px;width:10.6px;height:1.45px;background:#1c4347"></div><div class="abs" style="left:198.7px;top:38.2px;width:6.2px;height:1.45px;background:#1c4347"></div><div class="abs" style="left:200.7px;top:41.1px;width:2.2px;height:1.45px;background:#1c4347"></div>
<div class="abs" style="left:454.5px;top:35.2px;width:10.6px;height:1.45px;background:#1c4347"></div><div class="abs" style="left:456.7px;top:38.2px;width:6.2px;height:1.45px;background:#1c4347"></div><div class="abs" style="left:458.7px;top:41.1px;width:2.2px;height:1.45px;background:#1c4347"></div>
<div class="abs" style="left:637.5px;top:35.2px;width:10.6px;height:1.45px;background:#1c4347"></div><div class="abs" style="left:639.7px;top:38.2px;width:6.2px;height:1.45px;background:#1c4347"></div><div class="abs" style="left:641.7px;top:41.1px;width:2.2px;height:1.45px;background:#1c4347"></div>
<div class="abs" style="left:767.5px;top:35.2px;width:10.6px;height:1.45px;background:#1c4347"></div><div class="abs" style="left:769.7px;top:38.2px;width:6.2px;height:1.45px;background:#1c4347"></div><div class="abs" style="left:771.7px;top:41.1px;width:2.2px;height:1.45px;background:#1c4347"></div>
<div class="abs" style="left:1016.5px;top:35.2px;width:10.6px;height:1.45px;background:#1c4347"></div><div class="abs" style="left:1018.7px;top:38.2px;width:6.2px;height:1.45px;background:#1c4347"></div><div class="abs" style="left:1020.7px;top:41.1px;width:2.2px;height:1.45px;background:#1c4347"></div>
<div class="abs" style="left:1265.5px;top:35.2px;width:10.6px;height:1.45px;background:#1c4347"></div><div class="abs" style="left:1267.7px;top:38.2px;width:6.2px;height:1.45px;background:#1c4347"></div><div class="abs" style="left:1269.7px;top:41.1px;width:2.2px;height:1.45px;background:#1c4347"></div>
<div class="abs" style="left:1514.5px;top:35.2px;width:10.6px;height:1.45px;background:#1c4347"></div><div class="abs" style="left:1516.7px;top:38.2px;width:6.2px;height:1.45px;background:#1c4347"></div><div class="abs" style="left:1518.7px;top:41.1px;width:2.2px;height:1.45px;background:#1c4347"></div>
<div class="abs" style="left:1763.5px;top:35.2px;width:10.6px;height:1.45px;background:#1c4347"></div><div class="abs" style="left:1765.7px;top:38.2px;width:6.2px;height:1.45px;background:#1c4347"></div><div class="abs" style="left:1767.7px;top:41.1px;width:2.2px;height:1.45px;background:#1c4347"></div>
<!--/GRIDEXTRA-->
</div>
<!--OVERLAY-->
<div class="abs" style="left:653px;top:184px;width:119px;height:675px;background:#fff"></div>
<div class="abs conf" style="left:652.8px;top:192px;width:30px;height:590px">CONFIDENTIAL</div>
<!--/OVERLAY-->
<!--SCROLL-->
<div class="abs" style="left:1859px;top:125px;width:11px;height:754px;background:#fff;border-left:1px solid #e6e6e6"></div>
<div class="abs" style="left:1860px;top:179px;width:10px;height:5px;background:#dde3ea"></div>
<div class="abs" style="left:1860px;top:185px;width:8px;height:23px;border-radius:4px;background:#dadce0"></div>
<div class="abs" style="left:1860px;top:845px;width:10px;height:13px;border-top:1px solid #e6e6e6"></div>
<div class="abs" style="left:1860px;top:858px;width:10px;height:14px;border-top:1px solid #e6e6e6"></div>
<svg style="left:1861px;top:848px" width="8" height="6" viewBox="0 0 8 6"><path d="M0.5 5 L4 1.2 L7.5 5Z" fill="#80868b"/></svg>
<svg style="left:1861px;top:862px" width="8" height="6" viewBox="0 0 8 6"><path d="M0.5 1 L4 4.8 L7.5 1Z" fill="#80868b"/></svg>
<div class="abs" style="left:0;top:872px;width:1870px;height:7px;background:#fff;border-top:1px solid #d9d9d9"></div>
<div class="abs" style="left:0;top:873px;width:470px;height:6px;background:#f8f8f8"></div>
<div class="abs" style="left:470px;top:873px;width:4px;height:6px;background:#dde3ec"></div>
<div class="abs" style="left:557px;top:873px;width:451px;height:12px;border-radius:4px;background:#dadce0"></div>
<div class="abs" style="left:1832px;top:873px;width:13px;height:6px;border-left:1px solid #e6e6e6"></div>
<div class="abs" style="left:1846px;top:873px;width:13px;height:6px;border-left:1px solid #e6e6e6"></div>
<svg style="left:1836px;top:875px" width="6" height="8" viewBox="0 0 6 8"><path d="M5 0.5 L1.2 4 L5 7.5Z" fill="#80868b"/></svg>
<svg style="left:1851px;top:875px" width="6" height="8" viewBox="0 0 6 8"><path d="M1 0.5 L4.8 4 L1 7.5Z" fill="#80868b"/></svg>
<!--/SCROLL-->
</div></body></html>
